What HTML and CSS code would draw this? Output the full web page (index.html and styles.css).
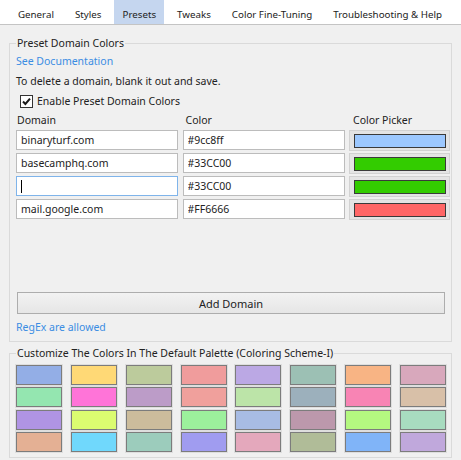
FILE: index.html
```html
<!DOCTYPE html>
<html>
<head>
<meta charset="utf-8">
<link rel="stylesheet" href="styles.css">
</head>
<body>
<nav class="tabs">
  <span class="tab">General</span>
  <span class="tab">Styles</span>
  <span class="tab active">Presets</span>
  <span class="tab">Tweaks</span>
  <span class="tab">Color Fine-Tuning</span>
  <span class="tab">Troubleshooting &amp; Help</span>
</nav>
<main class="page">
  <fieldset class="box presets">
    <legend>Preset Domain Colors</legend>
    <a class="link line">See Documentation</a>
    <div class="line">To delete a domain, blank it out and save.</div>
    <label class="check-row">
      <span class="checkbox"><svg viewBox="0 0 13 13" width="13" height="13"><path d="M3 6.5 L5.4 9 L10 3.6" fill="none" stroke="#1a1a1a" stroke-width="2"/></svg></span>
      Enable Preset Domain Colors
    </label>
    <div class="grid">
      <div class="head">Domain</div>
      <div class="head head-color">Color</div>
      <div class="head head-picker">Color Picker</div>

      <input class="field" value="binaryturf.com">
      <input class="field" value="#9cc8ff">
      <span class="picker"><span class="swatch" style="background:#9cc8ff"></span></span>

      <input class="field" value="basecamphq.com">
      <input class="field" value="#33CC00">
      <span class="picker"><span class="swatch" style="background:#33CC00"></span></span>

      <span class="caret-wrap"><input class="field focused" value=""><span class="caret"></span></span>
      <input class="field" value="#33CC00">
      <span class="picker"><span class="swatch" style="background:#33CC00"></span></span>

      <input class="field" value="mail.google.com">
      <input class="field" value="#FF6666">
      <span class="picker"><span class="swatch" style="background:#FF6666"></span></span>
    </div>
    <button class="add-btn">Add Domain</button>
    <a class="link line">RegEx are allowed</a>
  </fieldset>

  <fieldset class="box palette">
    <legend>Customize The Colors In The Default Palette (Coloring Scheme-I)</legend>
    <div class="swatches">
      <span class="pal" style="background:#93aee6"></span>
      <span class="pal" style="background:#ffd976"></span>
      <span class="pal" style="background:#bccb9c"></span>
      <span class="pal" style="background:#f09c9c"></span>
      <span class="pal" style="background:#bba8e4"></span>
      <span class="pal" style="background:#9cc0b4"></span>
      <span class="pal" style="background:#f8b484"></span>
      <span class="pal" style="background:#d8a8bc"></span>

      <span class="pal" style="background:#94e6b0"></span>
      <span class="pal" style="background:#ff74d8"></span>
      <span class="pal" style="background:#bc9cc8"></span>
      <span class="pal" style="background:#f0a09c"></span>
      <span class="pal" style="background:#bce4a8"></span>
      <span class="pal" style="background:#9cb0bc"></span>
      <span class="pal" style="background:#f884b4"></span>
      <span class="pal" style="background:#d8c0a8"></span>

      <span class="pal" style="background:#b094e4"></span>
      <span class="pal" style="background:#dcfc70"></span>
      <span class="pal" style="background:#ccbc9c"></span>
      <span class="pal" style="background:#9cf09c"></span>
      <span class="pal" style="background:#a8bce4"></span>
      <span class="pal" style="background:#bc98ac"></span>
      <span class="pal" style="background:#b4f880"></span>
      <span class="pal" style="background:#a8dcc0"></span>

      <span class="pal" style="background:#e4b094"></span>
      <span class="pal" style="background:#70d8fc"></span>
      <span class="pal" style="background:#9cccbc"></span>
      <span class="pal" style="background:#a09cf0"></span>
      <span class="pal" style="background:#e4a8bc"></span>
      <span class="pal" style="background:#b0bc98"></span>
      <span class="pal" style="background:#80b4f8"></span>
      <span class="pal" style="background:#c0a8dc"></span>
    </div>
  </fieldset>
</main>
</body>
</html>
```
FILE: styles.css
```css
* { box-sizing: border-box; }
html, body { margin: 0; padding: 0; }
body {
  background: #f0f0f0;
  font-family: "Noto Sans", "Open Sans", sans-serif;
  font-size: 10.5px;
  color: #222;
  width: 461px;
  height: 460px;
  overflow: hidden;
}
.tabs {
  display: flex;
  gap: 5px;
  padding-left: 10px;
  height: 25px;
  background: #fff;
  border-bottom: 1px solid #c4c4c4;
  white-space: nowrap;
  overflow: hidden;
}
.tab {
  padding: 0 8px 1px;
  display: flex;
  align-items: flex-end;
  height: 24px;
  line-height: 16px;
  font-size: 9.75px;
  flex: none;
}
.tab.active { background: #c5d6ef; }
.page { padding: 10px 9px 0; }
.box {
  margin: 0;
  border: 1px solid #dadada;
  padding: 0 6px 4px;
  min-width: 0;
}
.box legend {
  padding: 0 1px;
  margin-left: 0;
  line-height: 16px;
}
.line { display: block; line-height: 19px; }
.link { color: #3b8de3; text-decoration: none; }
.presets .line:first-of-type { margin-top: 1px; }
.check-row {
  display: flex;
  align-items: center;
  gap: 4px;
  height: 20px;
  padding-left: 4px;
}
.checkbox {
  width: 13px;
  height: 13px;
  border: 1px solid #333;
  background: #fff;
  display: flex;
}
.checkbox svg { display: block; margin: -1px; }
.grid {
  display: grid;
  grid-template-columns: 162px 162px 101px;
  grid-template-rows: 16px;
  column-gap: 4.5px;
  row-gap: 3px;
  grid-auto-rows: 20px;
  margin-bottom: 73px;
}
.head { line-height: 19px; height: 16px; padding-left: 1px; }
.head-color { padding-left: 3px; }
.head-picker { padding-left: 4px; }
.field {
  font: inherit;
  color: #222;
  width: 100%;
  height: 20px;
  border: 1px solid #bcbcbc;
  background: #fff;
  padding: 0 4px;
  margin: 0;
  outline: none;
}
.field.focused { border-color: #7fb4ea; }
.caret-wrap { position: relative; display: block; }
.caret {
  position: absolute;
  left: 5px;
  top: 4px;
  width: 1px;
  height: 13px;
  background: #000;
}
.picker {
  display: flex;
  align-items: center;
  justify-content: center;
  height: 21px;
  border: 1px solid #d2d2d2;
  background: #e4e4e4;
}
.swatch {
  width: 92px;
  height: 14px;
  border: 1px solid #3a3a3a;
}
.add-btn {
  display: block;
  width: 428px;
  margin-left: 1px;
  height: 22px;
  font: inherit;
  font-size: 11px;
  color: #222;
  border: 1px solid #adadad;
  background: linear-gradient(#f2f2f2, #e6e6e6);
  padding: 0;
}
.add-btn + .line { margin-top: 4px; }
.palette { margin-top: 3px; padding-bottom: 5px; }
.swatches {
  display: grid;
  grid-template-columns: repeat(8, 46px);
  column-gap: 8.85px;
  row-gap: 2.4px;
  grid-auto-rows: 20px;
  margin-top: 4px;
}
.pal {
  border: 1px solid #7c7c7c;
  box-shadow: 0 0 0 1px #dedede;
}
```
